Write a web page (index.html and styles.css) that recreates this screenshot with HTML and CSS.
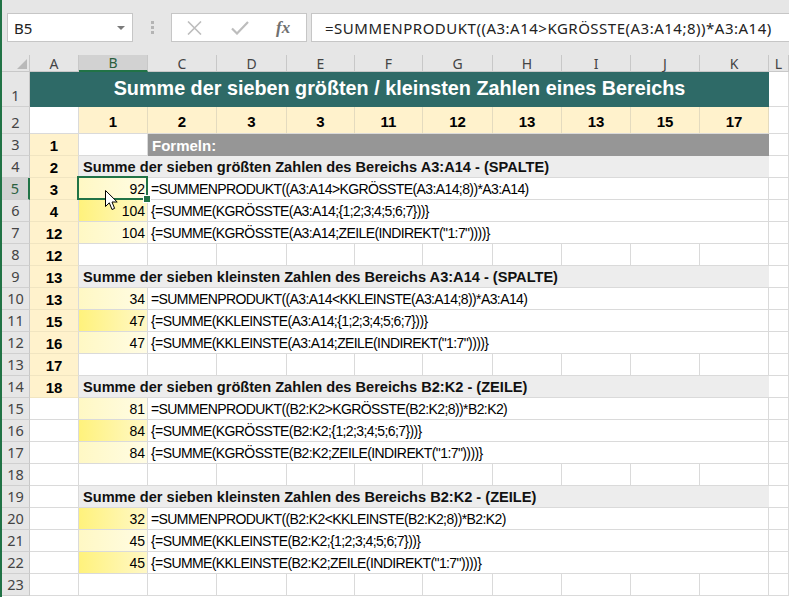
FILE: index.html
```html
<!DOCTYPE html>
<html lang="de">
<head>
<meta charset="utf-8">
<title>Excel</title>
<link rel="stylesheet" href="styles.css">
</head>
<body>
<div class="app">
  <div class="fbar">
    <div class="namebox"><span>B5</span><svg class="dd" width="8" height="4" viewBox="0 0 8 4"><path d="M0 0H8L4 4Z" fill="#7a7a7a"/></svg></div>
    <div class="dots"><i></i><i></i><i></i></div>
    <div class="btns">
      <svg class="ix" width="15" height="14" viewBox="0 0 15 14"><path d="M1 0.5L14 13.5M14 0.5L1 13.5" stroke="#bdbdbd" stroke-width="1.6"/></svg>
      <svg class="ic" width="18" height="14" viewBox="0 0 18 14"><path d="M1 7.5L6 12.5L17 1" stroke="#bdbdbd" stroke-width="2.2" fill="none"/></svg>
      <span class="fx">fx</span>
    </div>
    <div class="formula">=SUMMENPRODUKT((A3:A14&gt;KGRÖSSTE(A3:A14;8))*A3:A14)</div>
  </div>

  <div class="grid">
    <div class="ch corner"><svg width="10" height="10" viewBox="0 0 10 10"><path d="M10 0V10H0Z" fill="#b9b9b9"/></svg></div>
    <div class="ch">A</div><div class="ch chsel">B</div><div class="ch">C</div><div class="ch">D</div><div class="ch">E</div><div class="ch">F</div><div class="ch">G</div><div class="ch">H</div><div class="ch">I</div><div class="ch">J</div><div class="ch">K</div><div class="ch">L</div>

    <div class="rh">1</div><div class="title">Summe der sieben größten / kleinsten Zahlen eines Bereichs</div><div class="g"></div>

    <div class="rh">2</div><div class="g"></div><div class="y">1</div><div class="y">2</div><div class="y">3</div><div class="y">3</div><div class="y">11</div><div class="y">12</div><div class="y">13</div><div class="y">13</div><div class="y">15</div><div class="y">17</div><div class="g"></div>

    <div class="rh">3</div><div class="ya">1</div><div class="g"></div><div class="formeln">Formeln:</div><div class="g"></div>
    <div class="rh">4</div><div class="ya">2</div><div class="sec">Summe der sieben größten Zahlen des Bereichs A3:A14 - (SPALTE)</div><div class="g"></div>
    <div class="rh rhsel">5</div><div class="ya">3</div><div class="v lt sel">92</div><div class="f">=SUMMENPRODUKT((A3:A14&gt;KGRÖSSTE(A3:A14;8))*A3:A14)</div><div class="g"></div>
    <div class="rh">6</div><div class="ya">4</div><div class="v br">104</div><div class="f">{=SUMME(KGRÖSSTE(A3:A14;{1;2;3;4;5;6;7}))}</div><div class="g"></div>
    <div class="rh">7</div><div class="ya">12</div><div class="v lt">104</div><div class="f">{=SUMME(KGRÖSSTE(A3:A14;ZEILE(INDIREKT("1:7"))))}</div><div class="g"></div>
    <div class="rh">8</div><div class="ya">12</div><div class="g"></div><div class="g"></div><div class="g"></div><div class="g"></div><div class="g"></div><div class="g"></div><div class="g"></div><div class="g"></div><div class="g"></div><div class="g"></div><div class="g"></div>
    <div class="rh">9</div><div class="ya">13</div><div class="sec">Summe der sieben kleinsten Zahlen des Bereichs A3:A14 - (SPALTE)</div><div class="g"></div>
    <div class="rh">10</div><div class="ya">13</div><div class="v lt">34</div><div class="f">=SUMMENPRODUKT((A3:A14&lt;KKLEINSTE(A3:A14;8))*A3:A14)</div><div class="g"></div>
    <div class="rh">11</div><div class="ya">15</div><div class="v br">47</div><div class="f">{=SUMME(KKLEINSTE(A3:A14;{1;2;3;4;5;6;7}))}</div><div class="g"></div>
    <div class="rh">12</div><div class="ya">16</div><div class="v lt">47</div><div class="f">{=SUMME(KKLEINSTE(A3:A14;ZEILE(INDIREKT("1:7"))))}</div><div class="g"></div>
    <div class="rh">13</div><div class="ya">17</div><div class="g"></div><div class="g"></div><div class="g"></div><div class="g"></div><div class="g"></div><div class="g"></div><div class="g"></div><div class="g"></div><div class="g"></div><div class="g"></div><div class="g"></div>
    <div class="rh">14</div><div class="ya">18</div><div class="sec">Summe der sieben größten Zahlen des Bereichs B2:K2 - (ZEILE)</div><div class="g"></div>
    <div class="rh">15</div><div class="g"></div><div class="v lt">81</div><div class="f">=SUMMENPRODUKT((B2:K2&gt;KGRÖSSTE(B2:K2;8))*B2:K2)</div><div class="g"></div>
    <div class="rh">16</div><div class="g"></div><div class="v br">84</div><div class="f">{=SUMME(KGRÖSSTE(B2:K2;{1;2;3;4;5;6;7}))}</div><div class="g"></div>
    <div class="rh">17</div><div class="g"></div><div class="v lt">84</div><div class="f">{=SUMME(KGRÖSSTE(B2:K2;ZEILE(INDIREKT("1:7"))))}</div><div class="g"></div>
    <div class="rh">18</div><div class="g"></div><div class="g"></div><div class="g"></div><div class="g"></div><div class="g"></div><div class="g"></div><div class="g"></div><div class="g"></div><div class="g"></div><div class="g"></div><div class="g"></div><div class="g"></div>
    <div class="rh">19</div><div class="g"></div><div class="sec">Summe der sieben kleinsten Zahlen des Bereichs B2:K2 - (ZEILE)</div><div class="g"></div>
    <div class="rh">20</div><div class="g"></div><div class="v br">32</div><div class="f">=SUMMENPRODUKT((B2:K2&lt;KKLEINSTE(B2:K2;8))*B2:K2)</div><div class="g"></div>
    <div class="rh">21</div><div class="g"></div><div class="v lt">45</div><div class="f">{=SUMME(KKLEINSTE(B2:K2;{1;2;3;4;5;6;7}))}</div><div class="g"></div>
    <div class="rh">22</div><div class="g"></div><div class="v br">45</div><div class="f">{=SUMME(KKLEINSTE(B2:K2;ZEILE(INDIREKT("1:7"))))}</div><div class="g"></div>
    <div class="rh">23</div><div class="g"></div><div class="g"></div><div class="g"></div><div class="g"></div><div class="g"></div><div class="g"></div><div class="g"></div><div class="g"></div><div class="g"></div><div class="g"></div><div class="g"></div><div class="g"></div>
  </div>

  <svg class="cursor" width="13" height="21" viewBox="0 0 13 21"><path d="M0.5 0.5V16.5L4.3 12.8L7 19.5L9.6 18.4L7 12H12.2Z" fill="#fff" stroke="#000" stroke-width="1" stroke-linejoin="round"/></svg>
</div>
</body>
</html>
```

FILE: styles.css
```css
* { box-sizing: border-box; }
html, body { margin: 0; padding: 0; }
body {
  width: 789px;
  height: 597px;
  overflow: hidden;
  background: #fff;
  font-family: "Liberation Sans", Arial, sans-serif;
  color: #000;
}
.app {
  position: relative;
  height: 597px;
  border-left: 2px solid #217346;
}

/* formula bar */
.fbar {
  height: 55px;
  background: #e6e6e6;
  display: flex;
  align-items: flex-start;
  padding-top: 13px;
  padding-left: 5px;
}
.namebox {
  width: 126px;
  height: 29px;
  background: #fff;
  border: 1px solid #c6c6c6;
  display: flex;
  align-items: center;
  justify-content: space-between;
  padding: 0 7px 0 6px;
  font-family: "Noto Sans", sans-serif;
  font-size: 15px;
  color: #222;
}
.dots {
  width: 38px;
  height: 29px;
  display: flex;
  flex-direction: column;
  align-items: center;
  justify-content: center;
  gap: 2px;
}
.dots i {
  display: block;
  width: 3px;
  height: 3px;
  background: #b4b4b4;
}
.btns {
  width: 136px;
  height: 29px;
  background: #fff;
  border: 1px solid #c6c6c6;
  display: flex;
  align-items: center;
}
.ix { margin-left: 15px; }
.ic { margin-left: 29px; }
.fx {
  margin-left: 27px;
  font-family: "Liberation Serif", serif;
  font-style: italic;
  font-weight: bold;
  font-size: 17px;
  color: #707070;
}
.formula {
  flex: 1;
  height: 29px;
  margin-left: 4px;
  background: #fff;
  border: 1px solid #c6c6c6;
  border-right: none;
  display: flex;
  align-items: center;
  padding-left: 13px;
  font-family: "Noto Sans", sans-serif;
  font-size: 15px;
  letter-spacing: 0.5px;
  color: #222;
  white-space: nowrap;
}

/* sheet */
.grid {
  display: grid;
  grid-template-columns: 28px 49px 69px 69px 70px 68px 68px 70px 69px 69px 69px 69px 20px;
  grid-template-rows: 17px 35px 27px repeat(21, 22px);
}
.grid > div {
  display: flex;
  white-space: nowrap;
  min-width: 0;
}
.g {
  border-right: 1px solid #dadada;
  border-bottom: 1px solid #dadada;
}
.ch {
  background: #e6e6e6;
  border-right: 1px solid #c8c8c8;
  border-bottom: 1px solid #c8c8c8;
  justify-content: center;
  align-items: center;
  font-family: "Noto Sans", sans-serif;
  font-size: 14px;
  color: #444;
}
.corner {
  justify-content: flex-end;
  align-items: flex-end;
  padding: 0 2px 2px 0;
}
.chsel {
  background: #d2d2d2;
  color: #2b5f3f;
  border-bottom: 2px solid #217346;
}
.rh {
  background: #e6e6e6;
  border-right: 1px solid #c8c8c8;
  border-bottom: 1px solid #d0d0d0;
  justify-content: center;
  align-items: flex-end;
  padding-bottom: 1px;
  font-family: "Noto Sans", sans-serif;
  font-size: 14.5px;
  color: #444;
}
.rhsel {
  background: #d2d2d2;
  color: #2b5f3f;
  border-right: 2px solid #217346;
}
.title {
  grid-column: span 11;
  background: #2e6a67;
  color: #fff;
  font-weight: bold;
  font-size: 19.8px;
  justify-content: center;
  align-items: center;
  padding-bottom: 2px;
}
.y {
  background: #fff2cc;
  border-right: 1px solid #e4dbbf;
  border-bottom: 1px solid #dadada;
  justify-content: center;
  align-items: center;
  font-weight: bold;
  font-size: 15px;
  padding-top: 2px;
}
.ya {
  background: #fff2cc;
  border-right: 1px solid #dadada;
  border-bottom: 1px solid #f1e5c1;
  justify-content: center;
  align-items: center;
  font-weight: bold;
  font-size: 15px;
  padding-top: 2px;
}
.formeln {
  grid-column: span 9;
  background: #969696;
  color: #fff;
  font-weight: bold;
  font-size: 15px;
  align-items: center;
  padding-left: 4px;
  padding-top: 1px;
}
.sec {
  grid-column: span 10;
  background: #ededed;
  border-bottom: 1px solid #dadada;
  font-weight: bold;
  font-size: 14.6px;
  align-items: center;
  padding-left: 4px;
  padding-top: 1px;
  color: #111;
}
.v {
  border-right: 1px solid #dadada;
  border-bottom: 1px solid #dadada;
  justify-content: flex-end;
  align-items: center;
  padding-right: 2px;
  padding-top: 1px;
  font-size: 14px;
  position: relative;
}
.lt { background: linear-gradient(to right, #fff8c4, #fffce4); }
.br { background: linear-gradient(to right, #fff27c, #fff8c6); }
.sel::after {
  content: "";
  position: absolute;
  left: -2px;
  top: -2px;
  right: -1px;
  bottom: -1px;
  border: 2px solid #217346;
}
.sel::before {
  content: "";
  position: absolute;
  right: -4px;
  bottom: -4px;
  width: 6px;
  height: 6px;
  background: #217346;
  border: 1px solid #fff;
  z-index: 2;
}
.f {
  grid-column: span 9;
  border-right: 1px solid #dadada;
  border-bottom: 1px solid #dadada;
  align-items: center;
  padding-left: 3px;
  padding-top: 1px;
  font-size: 14px;
  letter-spacing: -0.6px;
}
.cursor {
  position: absolute;
  left: 103px;
  top: 190px;
}
```
